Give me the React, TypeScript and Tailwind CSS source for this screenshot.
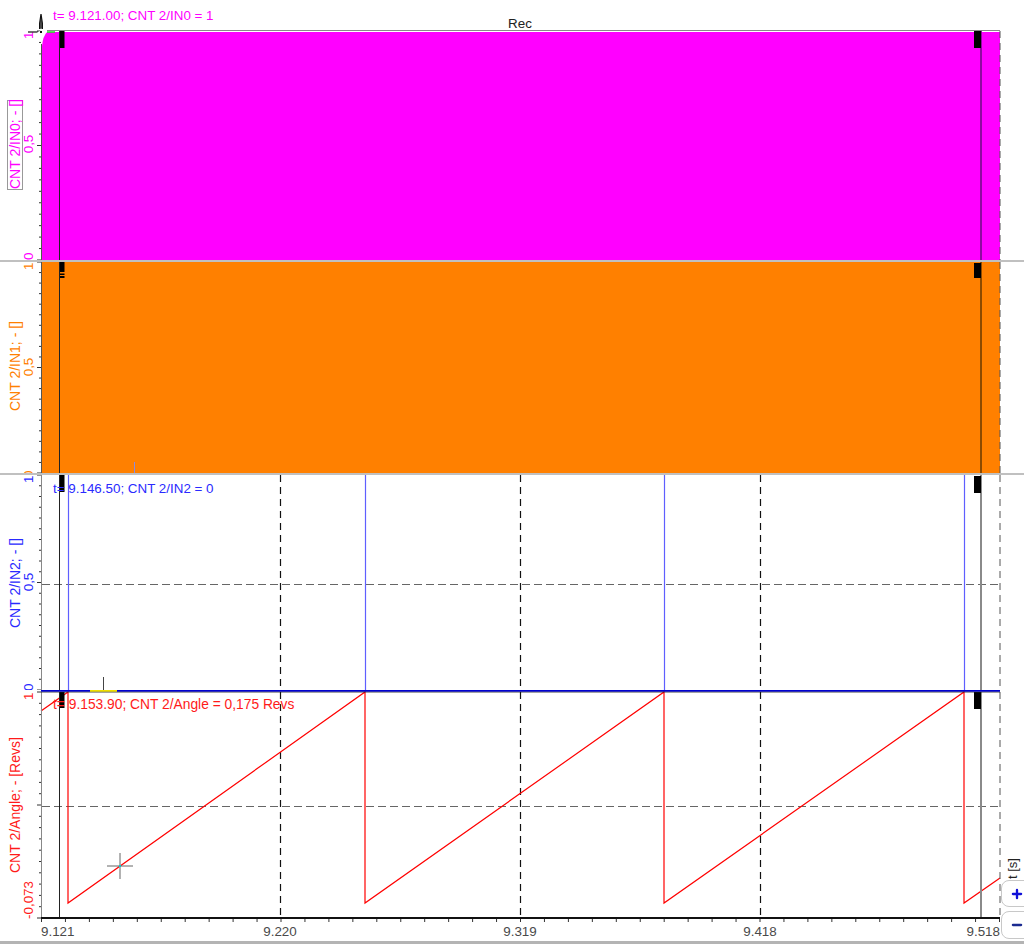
import { Minus, Plus } from "lucide-react";
import type { ReactNode } from "react";

const FS = 13.4;
const LABEL_FS = 14;
const MAGENTA = "#ff00ff";
const ORANGE = "#ff8000";
const BLUE = "#2a2aff";
const RED = "#ff1a1a";

// rotated axis text, reads bottom to top like the scope software
function VText(props: { x: number; y: number; fill: string; size?: number; anchor?: "start" | "middle" | "end"; children: ReactNode }) {
  const { x, y, fill, size = FS, anchor = "start", children } = props;
  return (
    <text x={x} y={y} fill={fill} fontSize={size} textAnchor={anchor} transform={`rotate(-90 ${x} ${y})`}>
      {children}
    </text>
  );
}

function Ticks({ top, bottom }: { top: number; bottom: number }) {
  const step = (bottom - top) / 20;
  return (
    <g stroke="#333">
      {Array.from({ length: 21 }, (_, i) => {
        const y = top + i * step;
        return <line key={i} x1={i % 10 === 0 ? 37 : 39} x2={41} y1={y} y2={y} />;
      })}
    </g>
  );
}

function Cursors({ top, bottom, right }: { top: number; bottom: number; right: string }) {
  return (
    <>
      <line x1={59.5} x2={59.5} y1={top} y2={bottom} stroke="#222" />
      <line x1={981} x2={981} y1={top} y2={bottom} stroke={right} strokeWidth={2} />
    </>
  );
}

function Dashed({ top, bottom, grid }: { top: number; bottom: number; grid?: number }) {
  return (
    <g>
      {[280.5, 520.5, 760.5].map((x) => (
        <line key={x} x1={x} x2={x} y1={top} y2={bottom} stroke="#111" strokeWidth={1.2} strokeDasharray="7 5" />
      ))}
      {grid !== undefined && <line x1={42} x2={1000} y1={grid} y2={grid} stroke="#666" strokeWidth={1.2} strokeDasharray="8 4" />}
    </g>
  );
}

function RightEdge({ top, bottom }: { top: number; bottom: number }) {
  return <line x1={1000} x2={1000} y1={top} y2={bottom} stroke="#555" strokeDasharray="7 5" />;
}

function Pane({ top, bottom, children }: { top: number; bottom: number; children: ReactNode }) {
  const h = bottom - top;
  return (
    <svg className="block w-[1024px] shrink-0" height={h} viewBox={`0 ${top} 1024 ${h}`}>
      {children}
    </svg>
  );
}

function Separator() {
  return <div className="h-[2px] shrink-0 bg-[#c0c0c0]" />;
}

const SAW = "41,711 68,692 68,903 365,692 365,903 664,692 664,903 964,692 964,903 1000,878";

export default function App() {
  return (
    <div className="relative h-[944px] w-[1024px] overflow-hidden bg-white font-['Liberation_Sans',sans-serif]">
      <div className="flex flex-col">
        <Pane top={0} bottom={260}>
          <path d="M42 260V46Q43 36 47 32H1000V260Z" fill={MAGENTA} />
          <line x1={47} x2={1000} y1={30.5} y2={30.5} stroke="#888" />
          <line x1={47} x2={55} y1={32} y2={32} stroke="#22e022" strokeWidth={1.5} />
          <Cursors top={31} bottom={260} right="#8f0aa0" />
          <rect x={60} y={31} width={4.5} height={17} fill="#000" />
          <rect x={974} y={31} width={7} height={17} fill="#000" />
          <RightEdge top={31} bottom={260} />
          <line x1={41.5} x2={41.5} y1={44} y2={260} stroke="#4d5f4d" />
          <Ticks top={31} bottom={260} />
          <text x={53} y={20} fill={MAGENTA} fontSize={FS}>t= 9.121.00; CNT 2/IN0 = 1</text>
          <text x={520} y={28} fill="#222" fontSize={FS} textAnchor="middle">Rec</text>
          <VText x={33} y={39} fill={MAGENTA}>1</VText>
          <VText x={33} y={144} fill={MAGENTA} anchor="middle">0,5</VText>
          <VText x={33} y={260} fill={MAGENTA}>0</VText>
          <rect x={7.5} y={100.5} width={15} height={89} fill="none" stroke="#999" />
          <VText x={20} y={189} fill={MAGENTA} size={LABEL_FS}>CNT 2/IN0; - []</VText>
          {/* mouse cursor */}
          <path d="M39.6 29V23.5L41 14L42.4 23.5V29" fill="#555" stroke="#111" strokeWidth={1.2} />
          <path d="M28 32H38.5" stroke="#111" strokeWidth={1.2} />
          <path d="M41 28L42.5 31L47 32.5L42.5 34L41.5 41L40 34L37 32.5L40 31Z" fill="#fff" />
          <rect x={40} y={31} width={2} height={2} fill="#111" />
        </Pane>
        <Separator />
        <Pane top={262} bottom={473}>
          <rect x={42} y={262} width={958} height={211} fill={ORANGE} />
          <Cursors top={262} bottom={473} right="#8c4a00" />
          <rect x={60} y={262} width={4.5} height={10} fill="#000" />
          <rect x={60} y={273.5} width={4.5} height={1.5} fill="#000" />
          <rect x={60} y={276} width={4.5} height={2} fill="#000" />
          <rect x={974} y={263} width={7} height={15} fill="#000" />
          <line x1={134.5} x2={134.5} y1={462} y2={473} stroke="#8a8ae0" />
          <RightEdge top={262} bottom={473} />
          <line x1={41.5} x2={41.5} y1={262} y2={473} stroke="#555" />
          <Ticks top={262} bottom={473} />
          <VText x={33} y={270} fill={ORANGE}>1</VText>
          <VText x={33} y={367} fill={ORANGE} anchor="middle">0,5</VText>
          <VText x={33} y={478} fill={ORANGE}>0</VText>
          <VText x={20} y={411} fill={ORANGE} size={LABEL_FS}>CNT 2/IN1; - []</VText>
        </Pane>
        <Separator />
        <Pane top={475} bottom={690}>
          <Dashed top={475} bottom={690} grid={584.5} />
          {[68.5, 365.5, 664.5, 964.5].map((x) => (
            <line key={x} x1={x} x2={x} y1={475} y2={690} stroke="#5f5fff" strokeWidth={1.2} />
          ))}
          <Cursors top={475} bottom={690} right="#8a8a8a" />
          <rect x={60} y={475} width={4.5} height={17} fill="#000" />
          <rect x={974} y={476} width={7} height={17} fill="#000" />
          <RightEdge top={475} bottom={690} />
          <line x1={41.5} x2={41.5} y1={475} y2={690} stroke="#888" />
          <Ticks top={475} bottom={690} />
          <line x1={103.5} x2={103.5} y1={677} y2={690} stroke="#444" />
          <text x={53} y={493} fill={BLUE} fontSize={FS}>t= 9.146.50; CNT 2/IN2 = 0</text>
          <VText x={33} y={483} fill={BLUE}>1</VText>
          <VText x={33} y={582} fill={BLUE} anchor="middle">0,5</VText>
          <VText x={33} y={691} fill={BLUE}>0</VText>
          <VText x={20} y={628} fill={BLUE} size={LABEL_FS}>CNT 2/IN2; - []</VText>
        </Pane>
        <Pane top={690} bottom={941}>
          <Dashed top={692} bottom={918} grid={806.5} />
          <polyline points={SAW} fill="none" stroke="#f00" strokeWidth={1.2} />
          <Cursors top={692} bottom={918} right="#8a8a8a" />
          <rect x={60} y={692} width={4.5} height={16} fill="#000" />
          <rect x={974} y={692} width={7} height={17} fill="#000" />
          <RightEdge top={692} bottom={918} />
          <line x1={41.5} x2={41.5} y1={692} y2={922} stroke="#888" />
          <Ticks top={692} bottom={918} />
          {/* top blue line of this pane belongs to the IN2 trace */}
          <rect x={41} y={690} width={959} height={1.8} fill="#0000d0" />
          <line x1={41} x2={1000} y1={692.2} y2={692.2} stroke="#222" strokeOpacity={0.6} />
          <rect x={90} y={690} width={27} height={1.8} fill="#f0e000" />
          <line x1={41} x2={1000} y1={918} y2={918} stroke="#111" strokeWidth={2} />
          <g stroke="#333">
            {Array.from({ length: 41 }, (_, i) => {
              const x = 41.5 + i * 23.95;
              return <line key={i} x1={x} x2={x} y1={919} y2={922} />;
            })}
          </g>
          {/* crosshair on the angle trace */}
          <path d="M120 853V879M107 866H133" stroke="#666" />
          <rect x={119} y={865} width={2} height={2} fill="#10c8c8" />
          <text x={53} y={709} fill={RED} fontSize={13.8}>t= 9.153.90; CNT 2/Angle = 0,175 Revs</text>
          <VText x={33} y={700} fill={RED}>1</VText>
          <VText x={33} y={919} fill={RED}>-0,073</VText>
          <VText x={20} y={873} fill={RED} size={LABEL_FS}>CNT 2/Angle; - [Revs]</VText>
          <g fill="#4a4a4a" fontSize={FS}>
            <text x={41} y={936}>9.121</text>
            <text x={280} y={936} textAnchor="middle">9.220</text>
            <text x={520} y={936} textAnchor="middle">9.319</text>
            <text x={760} y={936} textAnchor="middle">9.418</text>
            <text x={1000} y={936} textAnchor="end">9.518</text>
          </g>
        </Pane>
        <div className="h-[3px] shrink-0 bg-[#b4b4b4]" />
      </div>

      {/* zoom controls of the time axis */}
      <div className="absolute left-[1001px] top-[856px] flex w-[34px] flex-col items-start">
        <div className="flex h-[24px] w-[22px] items-center justify-center">
          <span className="block -rotate-90 whitespace-nowrap text-[13px] leading-none text-[#222]">t [s]</span>
        </div>
        <button className="flex h-[27px] w-[34px] items-center rounded-lg border border-[#c8c8c8] bg-white pl-[8px]">
          <Plus size={14} strokeWidth={4} color="#1010d8" />
        </button>
        <button className="mt-[4px] flex h-[28px] w-[34px] items-center rounded-lg border border-[#c8c8c8] bg-white pl-[8px]">
          <Minus size={14} strokeWidth={4} color="#1a2a90" />
        </button>
      </div>
    </div>
  );
}
